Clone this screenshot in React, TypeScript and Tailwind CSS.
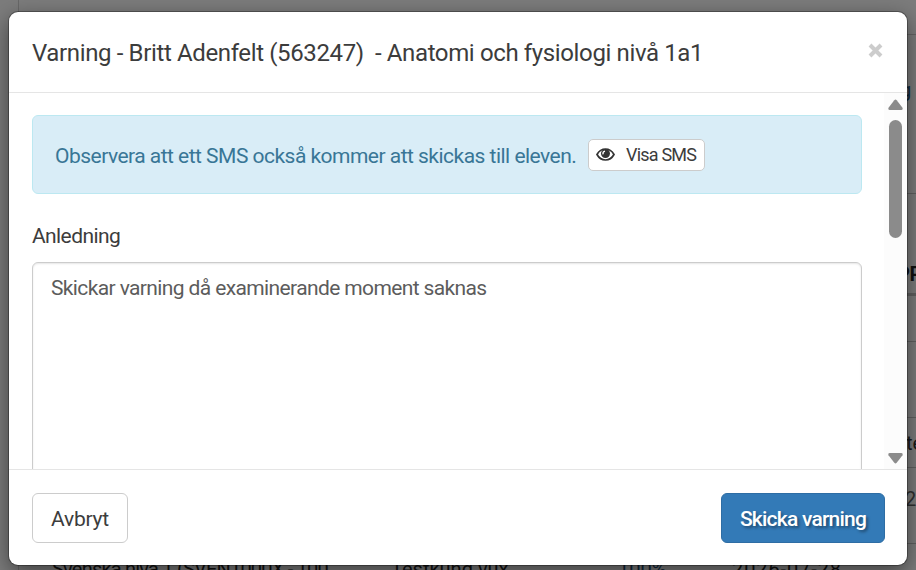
const backgroundRows = [
  { height: 'h-[159px] pt-[40px]', text: 'g', style: 'text-[#10283c]', cell: 'pl-[881px]' },
  { height: 'h-[102px] pt-[65px] border-b-[3px]', text: 'PP', style: 'text-[#111] font-bold tracking-[-0.5px]', cell: 'pl-[878px]' },
  { height: 'h-[46px]', text: '', style: '', cell: '' },
  { height: 'h-[76px]', text: '', style: '', cell: '' },
  { height: 'h-[50px] pt-[10px]', text: 'te', style: 'text-[#181818]', cell: 'pl-[887px]' },
  { height: 'h-[76px] pt-[16px]', text: '2', style: 'text-[#303030]', cell: 'pl-[886px]' },
];

function BackgroundPage() {
  return (
    <div className="h-full overflow-hidden bg-[#7c7c7c] pl-[18px]" aria-hidden="true">
      <div className="h-[650px] border-l border-[#686868] text-[20px] leading-[30px]">
        <div className="h-[35px] border-b border-[#656565]" />
        {backgroundRows.map((row, i) => (
          <div key={i} className={`overflow-hidden border-b border-[#606060] ${row.height}`}>
            <div className={`whitespace-nowrap ${row.cell} ${row.style}`}>{row.text}</div>
          </div>
        ))}
        <div className="flex whitespace-nowrap pt-[10px] pl-[33px] text-[#111]">
          <span className="w-[339px] tracking-[-0.8px]">Svenska nivå 1 (SVEN1000X - 100</span>
          <span className="w-[227px]">Testkund vux</span>
          <span className="w-[114px] text-[#10283c]">100%</span>
          <span className="tracking-[0.9px]">2026-07-28</span>
        </div>
      </div>
    </div>
  );
}

function EyeIcon() {
  return (
    <svg className="h-[14px] w-[19px]" viewBox="0 0 19 14" fill="none">
      <path d="M1 6.500C3 3 6 1 9.500 1S16 3 18 6.500c-2 3.600-5 5.500-8.500 5.500S3 10.100 1 6.500Z" stroke="#333" strokeWidth="1.700" />
      <circle cx="9.500" cy="5.500" r="4.500" fill="#333" />
      <path d="M7 6.400C6.700 4.500 7.500 3.400 9 3.100" stroke="#fff" strokeWidth="1.300" />
    </svg>
  );
}

function Scrollbar() {
  return (
    <div className="flex w-[23px] shrink-0 flex-col items-center bg-[#fcfcfc] pt-[6px] pb-[5px]">
      <svg className="h-[12px] w-[16px] shrink-0" viewBox="0 0 16 12" fill="#8b8b8b">
        <path d="M6.300 1.200Q7.500 0 8.700 1.200L14.500 8.800Q15.200 11 13.200 11H1.800Q-.2 11 .5 8.800Z" />
      </svg>
      <div className="mt-[9px] h-[118px] w-[13px] shrink-0 rounded-full bg-[#8b8b8b]" />
      <svg className="mt-auto h-[12px] w-[16px] shrink-0" viewBox="0 0 16 12" fill="#8b8b8b">
        <path d="M6.300 10.800Q7.500 12 8.700 10.800L14.500 3.200Q15.200 1 13.200 1H1.800Q-.2 1 .5 3.200Z" />
      </svg>
    </div>
  );
}

function WarningDialog() {
  return (
    <div
      role="dialog"
      className="absolute top-[12px] left-[9px] flex h-[553px] w-[898px] flex-col overflow-hidden rounded-[9px] bg-white text-[#3c3c3c] shadow-[0_0_0_1px_rgba(0,0,0,0.3),0_7px_22px_rgba(0,0,0,0.5)]"
    >
      <header className="flex h-[81px] shrink-0 items-center justify-between border-b border-[#e5e5e5] pr-[23px] pl-[23px]">
        <h4 className="whitespace-pre pt-[2px] text-[24px] leading-[34px] tracking-[-0.37px]">
          {'Varning - Britt Adenfelt (563247)\u00a0 - Anatomi och fysiologi nivå 1a1'}
        </h4>
        <button aria-label="Stäng" className="pb-[3px]">
          <svg className="h-[15px] w-[16px]" viewBox="0 0 16 15" stroke="#ccc" strokeWidth="4">
            <path d="M2 2l11 11M13 2L2 13" />
          </svg>
        </button>
      </header>

      <div className="flex min-h-0 flex-1">
        <div className="min-w-0 flex-1 overflow-hidden pt-[22px] pr-[22px] pl-[23px]">
          <div className="flex h-[79px] items-center rounded-[6px] border border-[#bce8f1] bg-[#d9edf7] pl-[22px] text-[#387696]">
            <span className="w-[533px] whitespace-nowrap pt-[3px] text-[21px] leading-[30px] tracking-[-0.52px]">
              Observera att ett SMS också kommer att skickas till eleven.
            </span>
            <button className="flex h-[32px] w-[117px] items-center rounded-[5px] border border-[#ccc] bg-white pl-[7px] text-[#3c3c3c]">
              <EyeIcon />
              <span className="ml-[11px] whitespace-nowrap text-[18px] leading-[27px] tracking-[-0.8px]">Visa SMS</span>
            </button>
          </div>
          <label htmlFor="reason" className="mt-[27px] block text-[21px] leading-[30px] tracking-[-0.6px]">
            Anledning
          </label>
          <textarea
            id="reason"
            readOnly
            className="mt-[11px] block h-[300px] w-full resize-none rounded-[6px] border border-[#ccc] px-[18px] py-[9px] text-[21px] leading-[32px] tracking-[-0.62px] text-[#5c5c5c] shadow-[inset_0_1px_2px_rgba(0,0,0,0.1)] outline-none"
            defaultValue="Skickar varning då examinerande moment saknas"
          />
        </div>
        <Scrollbar />
      </div>

      <footer className="flex h-[96px] shrink-0 items-center justify-between border-t border-[#e5e5e5] pr-[22px] pl-[23px] text-[21px]">
        <button className="h-[50px] w-[96px] rounded-[6px] border border-[#ccc] bg-white pt-[4px] tracking-[-0.2px]">Avbryt</button>
        <button className="h-[50px] w-[164px] rounded-[6px] border border-[#2e6da4] bg-[#337ab7] pt-[4px] font-medium tracking-[-0.78px] whitespace-nowrap text-white [text-shadow:2px_2px_3px_rgba(0,0,0,0.4)]">
          Skicka varning
        </button>
      </footer>
    </div>
  );
}

export default function App() {
  return (
    <div className="relative h-[570px] w-[916px] overflow-hidden font-['Roboto',sans-serif] font-normal">
      <BackgroundPage />
      <WarningDialog />
    </div>
  );
}
